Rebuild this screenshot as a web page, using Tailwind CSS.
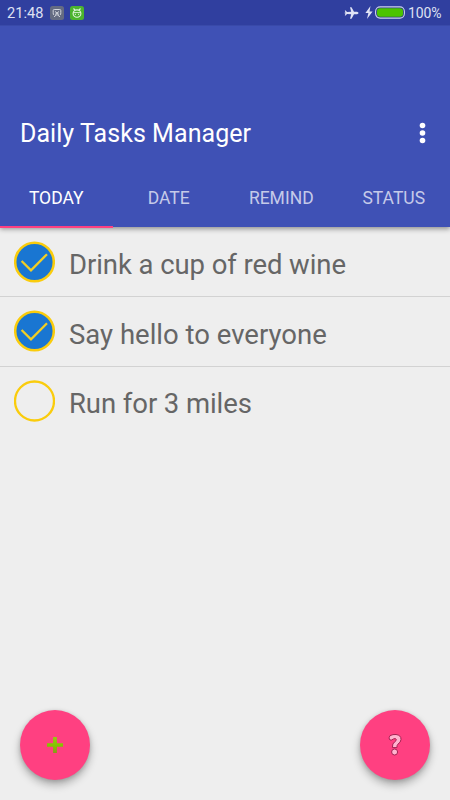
<!DOCTYPE html>
<html lang="en">
<head>
<meta charset="utf-8">
<title>Daily Tasks Manager</title>
<script src="https://cdn.jsdelivr.net/npm/@tailwindcss/browser@4"></script>
</head>
<body class="bg-[#eeeeee]">
<div class="relative flex h-[800px] w-[450px] flex-col overflow-hidden bg-[#eeeeee] font-[Roboto,sans-serif]">
  <header class="relative z-10 flex h-[227px] shrink-0 flex-col bg-[#3f51b5] shadow-[0_2px_5px_rgba(0,0,0,0.4)]">
    <div class="flex h-[25px] shrink-0 items-center bg-[#303f9f] pl-[7px] pr-[8px] text-[#dfe1f2]">
      <span class="w-[43px] whitespace-nowrap pt-px text-[14.6px] leading-[25px]">21:48</span>
      <svg class="h-[14px] w-[14px]" viewBox="0 0 14 14"><rect width="14" height="14" rx="2.5" fill="#646b82"/><path d="M4 9Q3 8.500 3.200 6.500V4.500Q3.200 3.500 4.200 3.500h5.600q1 0 1 1v2Q11 8.500 10 9M5 5.500l4 3M9 5.500l-4 3M4 10.800L7 8.500l3 2.300" fill="none" stroke="#d3d6de" stroke-width="1"/></svg>
      <svg class="ml-[6px] h-[14px] w-[14px]" viewBox="0 0 14 14"><rect width="14" height="14" rx="2.500" fill="#4bb32d"/><path d="M3.500 2.500L5 4.200M10.500 2.500L9 4.200" stroke="#e1f5dc" stroke-width="1.200"/><ellipse cx="7" cy="7.600" rx="3.900" ry="3.700" fill="none" stroke="#e1f5dc" stroke-width="1.100"/><path d="M3.200 6.600h7.600M5.400 7.800v1.200M8.600 7.800v1.200" stroke="#e1f5dc" stroke-width=".9"/></svg>
      <svg class="ml-auto h-[14px] w-[15px]" viewBox="0 0 15 14"><path d="M14.500 7q0-1-1.500-1.200H10L7.500 1.300H6l1.200 4.500L3 6.100 1.700 4.500H.8L1.500 6.500 0 7l1.500.5-.7 2h.9L3 7.900l4.200.3L6 12.700h1.500L10 8.200h3q1.500-.2 1.500-1.200z" fill="#e0e3f5"/></svg>
      <svg class="ml-[6px] h-[13px] w-[8px]" viewBox="0 0 8 13"><path d="M5.500 0L.4 7h3L2 13l5.600-7.500H4.500z" fill="#e0e3f5"/></svg>
      <svg class="ml-[2px] h-[13px] w-[30px]" viewBox="0 0 30 13"><rect x=".6" y=".9" width="28.800" height="11.200" rx="4.500" fill="#253c79" stroke="#cdd3ee" stroke-width="1.100"/><rect x="2" y="2.200" width="26" height="8.600" rx="3.200" fill="#4bc400"/></svg>
      <span class="ml-[3px] w-[34px] whitespace-nowrap pt-px text-[14px] leading-[25px] tracking-[-0.1px]">100%</span>
    </div>
    <div class="flex h-[145px] shrink-0 items-end justify-between border-t border-[#394aa9] pb-[19px] pl-[20px] pr-[24px] text-white">
      <h1 class="whitespace-nowrap text-[25px] leading-[34px] tracking-[0.05px]">Daily Tasks Manager</h1>
      <svg class="mb-[7px] h-[22px] w-[7px]" viewBox="0 0 7 22" fill="white"><circle cx="3.500" cy="3.500" r="2.800"/><circle cx="3.500" cy="11" r="2.800"/><circle cx="3.500" cy="18.500" r="2.800"/></svg>
    </div>
    <nav class="grid h-[57px] grid-cols-4 text-center text-[17.5px] leading-[56px] text-[#c5cae9]">
      <span class="border-b-[2px] border-[#ff4081] text-white">TODAY</span>
      <span>DATE</span>
      <span>REMIND</span>
      <span>STATUS</span>
    </nav>
  </header>
  <main class="flex flex-col text-[27.5px] tracking-[-0.08px] text-[#666666]">
    <div class="flex h-[70px] items-center border-b border-[#d2d2d2] pl-[14px]">
      <svg class="h-[42px] w-[41px] shrink-0" viewBox="0 0 41 42"><circle cx="20.500" cy="21" r="19.300" fill="#1976d2" stroke="#facc0c" stroke-width="2.500"/><path d="M7.600 20l9.400 9.300L33 13.200" fill="none" stroke="#f3ce22" stroke-width="2.300"/></svg>
      <span class="ml-[14px] mt-[6px] whitespace-nowrap">Drink a cup of red wine</span>
    </div>
    <div class="flex h-[70px] items-center border-b border-[#d2d2d2] pl-[14px]">
      <svg class="mb-px h-[42px] w-[41px] shrink-0" viewBox="0 0 41 42"><circle cx="20.500" cy="21" r="19.300" fill="#1976d2" stroke="#facc0c" stroke-width="2.500"/><path d="M7.600 20l9.400 9.300L33 13.200" fill="none" stroke="#f3ce22" stroke-width="2.300"/></svg>
      <span class="ml-[14px] mt-[6px] whitespace-nowrap tracking-normal">Say hello to everyone</span>
    </div>
    <div class="flex h-[68px] items-center pl-[14px]">
      <svg class="h-[42px] w-[41px] shrink-0" viewBox="0 0 41 42"><circle cx="20.500" cy="21" r="19.500" fill="none" stroke="#facc0c" stroke-width="2.300"/></svg>
      <span class="ml-[14px] mt-[6px] whitespace-nowrap">Run for 3 miles</span>
    </div>
  </main>
  <footer class="mt-auto flex justify-between px-[20px] pb-[20px]">
    <button class="flex h-[70px] w-[70px] items-center justify-center rounded-full bg-[#ff4081] shadow-[0_5px_8px_rgba(0,0,0,0.28),0_1px_4px_rgba(0,0,0,0.15)]" aria-label="Add">
      <svg class="h-[18px] w-[18px]" viewBox="0 0 18 18"><defs><linearGradient id="plus" x1="0" y1="0" x2="0" y2="1"><stop offset="0" stop-color="#98c813"/><stop offset=".5" stop-color="#83c500"/><stop offset="1" stop-color="#889c18"/></linearGradient></defs><path d="M7.100 1h3.800v6.200H17v3.600h-6.100V17H7.100v-6.200H1V7.200h6.100z" fill="url(#plus)"/></svg>
    </button>
    <button class="flex h-[70px] w-[70px] items-center justify-center rounded-full bg-[#ff4081] shadow-[0_5px_8px_rgba(0,0,0,0.28),0_1px_4px_rgba(0,0,0,0.15)]" aria-label="Help">
      <svg class="h-[24px] w-[16px]" viewBox="0 0 16 24" stroke="#a52152" stroke-width="1" stroke-linejoin="round"><path d="M2.200 4.500L3 2.600Q6 1.200 9 1.500Q14.200 2.200 14 6.500Q13.800 9.300 10.900 11.200Q9.900 12 9.900 14.600H5.400Q5.200 10.300 7.600 8.900Q9.500 7.700 9.300 6.400Q8.700 5 6.500 5.900Q4.500 7.500 3.100 7Q1.900 6.200 2.200 4.500z" fill="#ffb4cf"/><circle cx="7.600" cy="19" r="3" fill="#ffb4cf"/></svg>
    </button>
  </footer>
</div>
</body>
</html>
